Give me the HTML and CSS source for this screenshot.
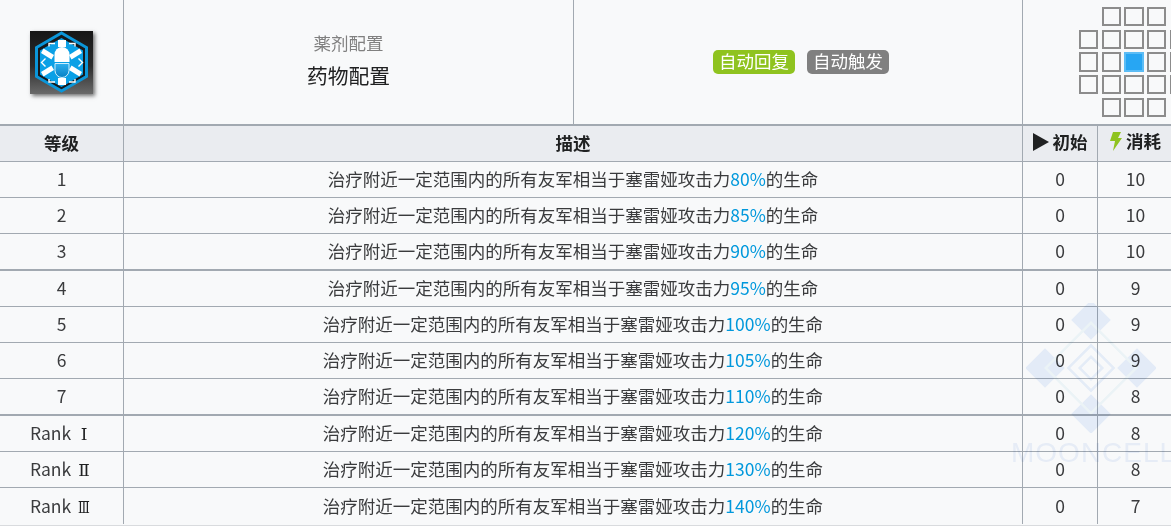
FILE: index.html
```html
<!DOCTYPE html>
<html lang="zh-CN">
<head>
<meta charset="utf-8">
<title>药物配置</title>
<link rel="stylesheet" href="styles.css">
</head>
<body>
<div class="wrap">
<table class="skill">
<colgroup><col class="c-level"><col class="c-half"><col class="c-half2"><col class="c-init"><col class="c-cost"></colgroup>
<thead>
<tr class="top">
<td class="icon-cell">
<div class="icon">
<svg viewBox="0 0 63 63" width="63" height="63">
<defs>
<linearGradient id="cap" x1="0" y1="0" x2="0" y2="1"><stop offset="0" stop-color="#2fb0ee"/><stop offset="1" stop-color="#0680c4"/></linearGradient>
</defs>
<polygon points="31.500,2 56.500,16.500 56.500,45.500 31.500,60 6.500,45.500 6.500,16.500" fill="#16191c" stroke="#0b96d9" stroke-width="3"/>
<polygon points="31.500,7 53,19.500 53,43.500 31.500,56 10,43.500 10,19.500" fill="#0aa0e6"/>
<g fill="#fff">
<rect x="28" y="9" width="8" height="7"/>
<rect x="28" y="47" width="8" height="7"/>
<polygon points="11,22 13.500,17.500 24,24 21.500,28.500"/>
<polygon points="52,22 49.500,17.500 39,24 41.500,28.500"/>
<polygon points="11,41 13.500,45.500 24,39 21.500,34.500"/>
<polygon points="52,41 49.500,45.500 39,39 41.500,34.500"/>
<path d="M24.500 31v-7.500a7.500 7.500 0 0 1 15 0v7.500z"/>
</g>
<path d="M25 32.500v7a7 7 0 0 0 14 0v-7z" fill="url(#cap)" stroke="#cfeefc" stroke-width="1"/>
<g fill="none" stroke="#fff" stroke-width="1.400">
<path d="M25 12.500h-6v3M39 12.500h6v3M25 51h-6v-3M39 51h6v-3M15.500 27.500l-4 4 4 4M48.500 27.500l4 4-4 4"/>
</g>
</svg>
</div>
</td>
<td class="name-cell">
<div class="sub">薬剂配置</div>
<div class="title">药物配置</div>
</td>
<td class="tag-cell">
<div class="tags"><span class="tag green">自动回复</span><span class="tag gray">自动触发</span></div>
</td>
<td class="range-cell" colspan="2">
<div class="range">
<i class="off"></i><i></i><i></i><i></i><i class="off"></i>
<i></i><i></i><i></i><i></i><i></i>
<i></i><i></i><i class="me"></i><i></i><i></i>
<i></i><i></i><i></i><i></i><i></i>
<i class="off"></i><i></i><i></i><i></i><i class="off"></i>
</div>
</td>
</tr>
<tr class="head">
<th>等级</th>
<th colspan="2">描述</th>
<th><span class="hd"><svg class="play" viewBox="0 0 16 18" width="16" height="18"><polygon points="0,0 16,9 0,18" fill="#202122"/></svg>初始</span></th>
<th><span class="hd"><svg class="bolt" viewBox="0 0 12 19" width="12" height="19"><polygon points="3,0 11,0 8,6 12,6 3,19 5,9 0,9" fill="#8fc31f"/></svg>消耗</span></th>
</tr>
</thead>
<tbody>
<tr><td>1</td><td colspan="2">治疗附近一定范围内的所有友军相当于塞雷娅攻击力<span class="num">80%</span>的生命</td><td>0</td><td>10</td></tr>
<tr><td>2</td><td colspan="2">治疗附近一定范围内的所有友军相当于塞雷娅攻击力<span class="num">85%</span>的生命</td><td>0</td><td>10</td></tr>
<tr class="thick"><td>3</td><td colspan="2">治疗附近一定范围内的所有友军相当于塞雷娅攻击力<span class="num">90%</span>的生命</td><td>0</td><td>10</td></tr>
<tr><td>4</td><td colspan="2">治疗附近一定范围内的所有友军相当于塞雷娅攻击力<span class="num">95%</span>的生命</td><td>0</td><td>9</td></tr>
<tr><td>5</td><td colspan="2">治疗附近一定范围内的所有友军相当于塞雷娅攻击力<span class="num">100%</span>的生命</td><td>0</td><td>9</td></tr>
<tr><td>6</td><td colspan="2">治疗附近一定范围内的所有友军相当于塞雷娅攻击力<span class="num">105%</span>的生命</td><td>0</td><td>9</td></tr>
<tr class="thick"><td>7</td><td colspan="2">治疗附近一定范围内的所有友军相当于塞雷娅攻击力<span class="num">110%</span>的生命</td><td>0</td><td>8</td></tr>
<tr><td>Rank <span class="rn">Ⅰ</span></td><td colspan="2">治疗附近一定范围内的所有友军相当于塞雷娅攻击力<span class="num">120%</span>的生命</td><td>0</td><td>8</td></tr>
<tr><td>Rank <span class="rn">Ⅱ</span></td><td colspan="2">治疗附近一定范围内的所有友军相当于塞雷娅攻击力<span class="num">130%</span>的生命</td><td>0</td><td>8</td></tr>
<tr class="last"><td>Rank <span class="rn rn3">Ⅲ</span></td><td colspan="2">治疗附近一定范围内的所有友军相当于塞雷娅攻击力<span class="num">140%</span>的生命</td><td>0</td><td>7</td></tr>
</tbody>
</table>
<div class="endline"></div>
<div class="mark">
<svg viewBox="0 0 130 130" width="130" height="130">
<g fill="#eaf1fc">
<rect x="51" y="3" width="28" height="28" transform="rotate(45 65 17)"/>
<rect x="5" y="51" width="28" height="28" transform="rotate(45 19 65)"/>
<rect x="97" y="51" width="28" height="28" transform="rotate(45 111 65)"/>
<rect x="51" y="97" width="28" height="28" transform="rotate(45 65 111)"/>
</g>
<g fill="none" stroke-width="2.500">
<rect x="33" y="33" width="64" height="64" stroke="#f2f9fb" transform="rotate(45 65 65)"/>
<rect x="49" y="49" width="32" height="32" stroke="#ebf2fc" transform="rotate(45 65 65)"/>
<rect x="57" y="57" width="16" height="16" stroke="#ebf2fc" transform="rotate(45 65 65)"/>
</g>
</svg>
<span class="mark-text">MOONCELL</span>
</div>
</div>
</body>
</html>
```
FILE: styles.css
```css
html, body {
  margin: 0;
  padding: 0;
  height: 100%;
  overflow: hidden;
  background: #f8f9fa;
}
.wrap {
  position: relative;
  width: 1171px;
  height: 526px;
  overflow: hidden;
  font-family: "Noto Sans CJK SC", "Noto Sans", sans-serif;
  color: #3a3b3d;
}
.skill {
  table-layout: fixed;
  border-collapse: separate;
  border-spacing: 0;
  width: 1173px;
  font-size: 17.5px;
  line-height: 24px;
}
.c-level { width: 124px; }
.c-half { width: 450px; }
.c-half2 { width: 449px; }
.c-init { width: 75px; }
.c-cost { width: 75px; }
td, th {
  padding: 0 0 1px;
  text-align: center;
  height: 34px;
  border-right: 1px solid #a2a9b1;
  border-bottom: 1px solid #a2a9b1;
  box-sizing: content-box;
  font-weight: 400;
}
td:last-child, th:last-child { border-right: 0; }
.top td {
  padding: 0;
  height: 124px;
  border-bottom: 2px solid #a2a9b1;
  background: #f8f9fa;
}
.top .name-cell {
  box-sizing: border-box;
  height: 126px;
  padding-bottom: 5px;
}
.head th {
  background: #eaecf0;
  font-weight: 700;
  color: #202122;
  padding-bottom: 2px;
  height: 33px;
}
.thick td { border-bottom-width: 2px; }
.last td { border-bottom: 0; height: 35px; }
.rn {
  display: inline-block;
  width: 18px;
  font-family: "DejaVu Serif", serif;
  font-size: 17px;
  line-height: 20px;
  color: #202122;
}
.rn3 { transform: scaleX(.72); }
.icon {
  width: 63px;
  height: 63px;
  margin: 0 0 0 30px;
  background: linear-gradient(#161616 0%, #2b2b2b 55%, #6a6a6a 100%);
  box-shadow: 2px 2px 4px rgba(0, 0, 0, .55);
}
.icon svg { display: block; }
.sub {
  color: #808080;
  line-height: 24px;
  margin-bottom: 6px;
}
.title {
  font-size: 20.8px;
  line-height: 28px;
  color: #202122;
}
.tags {
  display: flex;
  justify-content: center;
  gap: 12px;
  padding-left: 6px;
}
.tag {
  color: #fff;
  width: 82px;
  height: 23.5px;
  line-height: 22px;
  border-radius: 5px;
}
.green { background: #8fc31f; }
.gray { background: #808080; }
.range {
  display: grid;
  grid-template-columns: repeat(5, 19.33px);
  grid-auto-rows: 19.33px;
  gap: 3.33px;
  margin-left: 56px;
  width: 110px;
}
.range i {
  display: block;
  box-sizing: border-box;
  border: 2px solid #8c8c8c;
  background: #f8f9fa;
}
.range i.off { visibility: hidden; }
.range i.me {
  background: #27a6f3;
  border-color: #5bbcf5;
}
.hd {
  display: inline-flex;
  align-items: center;
  gap: 4px;
}
.num { color: #0098dc; }
.endline {
  height: 2px;
  margin-top: 1px;
  background: #d9dbde;
}
.mark {
  position: absolute;
  left: 1026px;
  top: 303px;
  width: 200px;
  height: 170px;
  pointer-events: none;
  mix-blend-mode: multiply;
}
.mark svg { display: block; }
.mark-text {
  position: absolute;
  left: -15px;
  top: 134px;
  font-family: "Liberation Sans", sans-serif;
  font-size: 28px;
  line-height: 32px;
  letter-spacing: 1px;
  color: #edf2fb;
}
```
